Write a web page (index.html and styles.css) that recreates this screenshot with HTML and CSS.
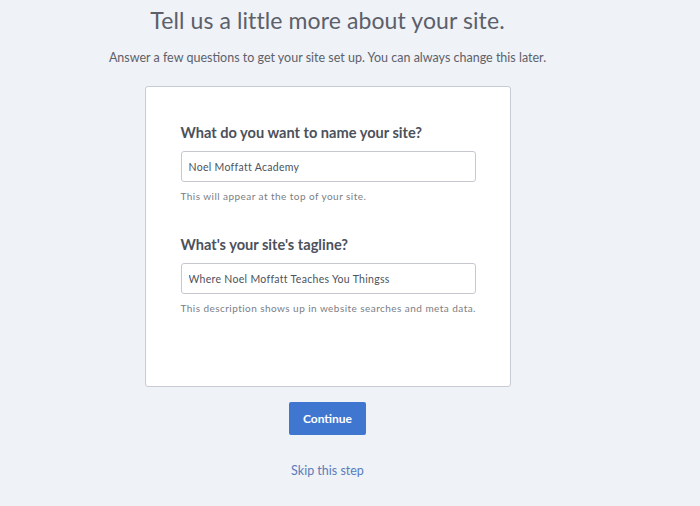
FILE: index.html
```html
<!doctype html>
<html>
	<head>
		<title>Tell us a little more about your site</title>
		<link rel="stylesheet" href="styles.css">
	</head>
	<body>
		<div class="page">
			<h1 class="title">Tell us a little more about your site.</h1>
			<p class="intro">Answer a few questions to get your site set up. You can always change this later.</p>

			<form class="card">
				<div class="field">
					<label class="label" for="site-name">What do you want to name your site?</label>
					<input class="input" id="site-name" type="text" value="Noel Moffatt Academy">
					<p class="help">This will appear at the top of your site.</p>
				</div>

				<div class="field">
					<label class="label" for="site-tagline">What's your site's tagline?</label>
					<input class="input" id="site-tagline" type="text" value="Where Noel Moffatt Teaches You Thingss">
					<p class="help">This description shows up in website searches and meta data.</p>
				</div>
			</form>

			<button class="continue" type="button">Continue</button>
			<a class="skip" href="#">Skip this step</a>
		</div>
	</body>
</html>
```

FILE: styles.css
```css
body {
	margin: 0;
	background: #eff2f7;
	font-family: Lato, "Open Sans", Arial, sans-serif;
	color: #5a5f6b;
}

.page {
	width: 655px;
	display: flex;
	flex-direction: column;
	align-items: center;
	padding-top: 6px;
}

.title {
	margin: 0;
	font-size: 23px;
	font-weight: 400;
	color: #5b606b;
	letter-spacing: 0.1px;
	line-height: 28px;
}

.intro {
	margin: 16px 0 0 0;
	font-size: 12.5px;
	color: #5d6169;
	line-height: 16px;
}

.card {
	box-sizing: border-box;
	width: 366px;
	height: 301px;
	margin-top: 20px;
	padding: 37px 35px 0 35px;
	background: white;
	border: 1px solid #c7ccd4;
	border-radius: 3px;
	display: flex;
	flex-direction: column;
	gap: 34px;
}

.field {
	display: flex;
	flex-direction: column;
}

.label {
	font-size: 14.6px;
	font-weight: 700;
	color: #4c515b;
	line-height: 18px;
}

.input {
	box-sizing: border-box;
	width: 295px;
	height: 31px;
	margin-top: 9px;
	padding: 0 7px;
	border: 1px solid #c5c9cf;
	border-radius: 3px;
	font-family: Lato, "Open Sans", Arial, sans-serif;
	font-size: 10.5px;
	letter-spacing: 0.3px;
	color: #4d525b;
}

.help {
	margin: 8px 0 0 0;
	font-size: 10px;
	letter-spacing: 0.45px;
	white-space: nowrap;
	color: #7a7e85;
	line-height: 12px;
}

.continue {
	margin-top: 15px;
	width: 77px;
	height: 33px;
	background: #3f77d0;
	border: none;
	border-radius: 2px;
	color: white;
	font-family: Lato, "Open Sans", Arial, sans-serif;
	font-size: 12px;
	font-weight: 700;
}

.skip {
	margin-top: 28px;
	font-size: 12.5px;
	color: #5a7cba;
	text-decoration: none;
}
```
